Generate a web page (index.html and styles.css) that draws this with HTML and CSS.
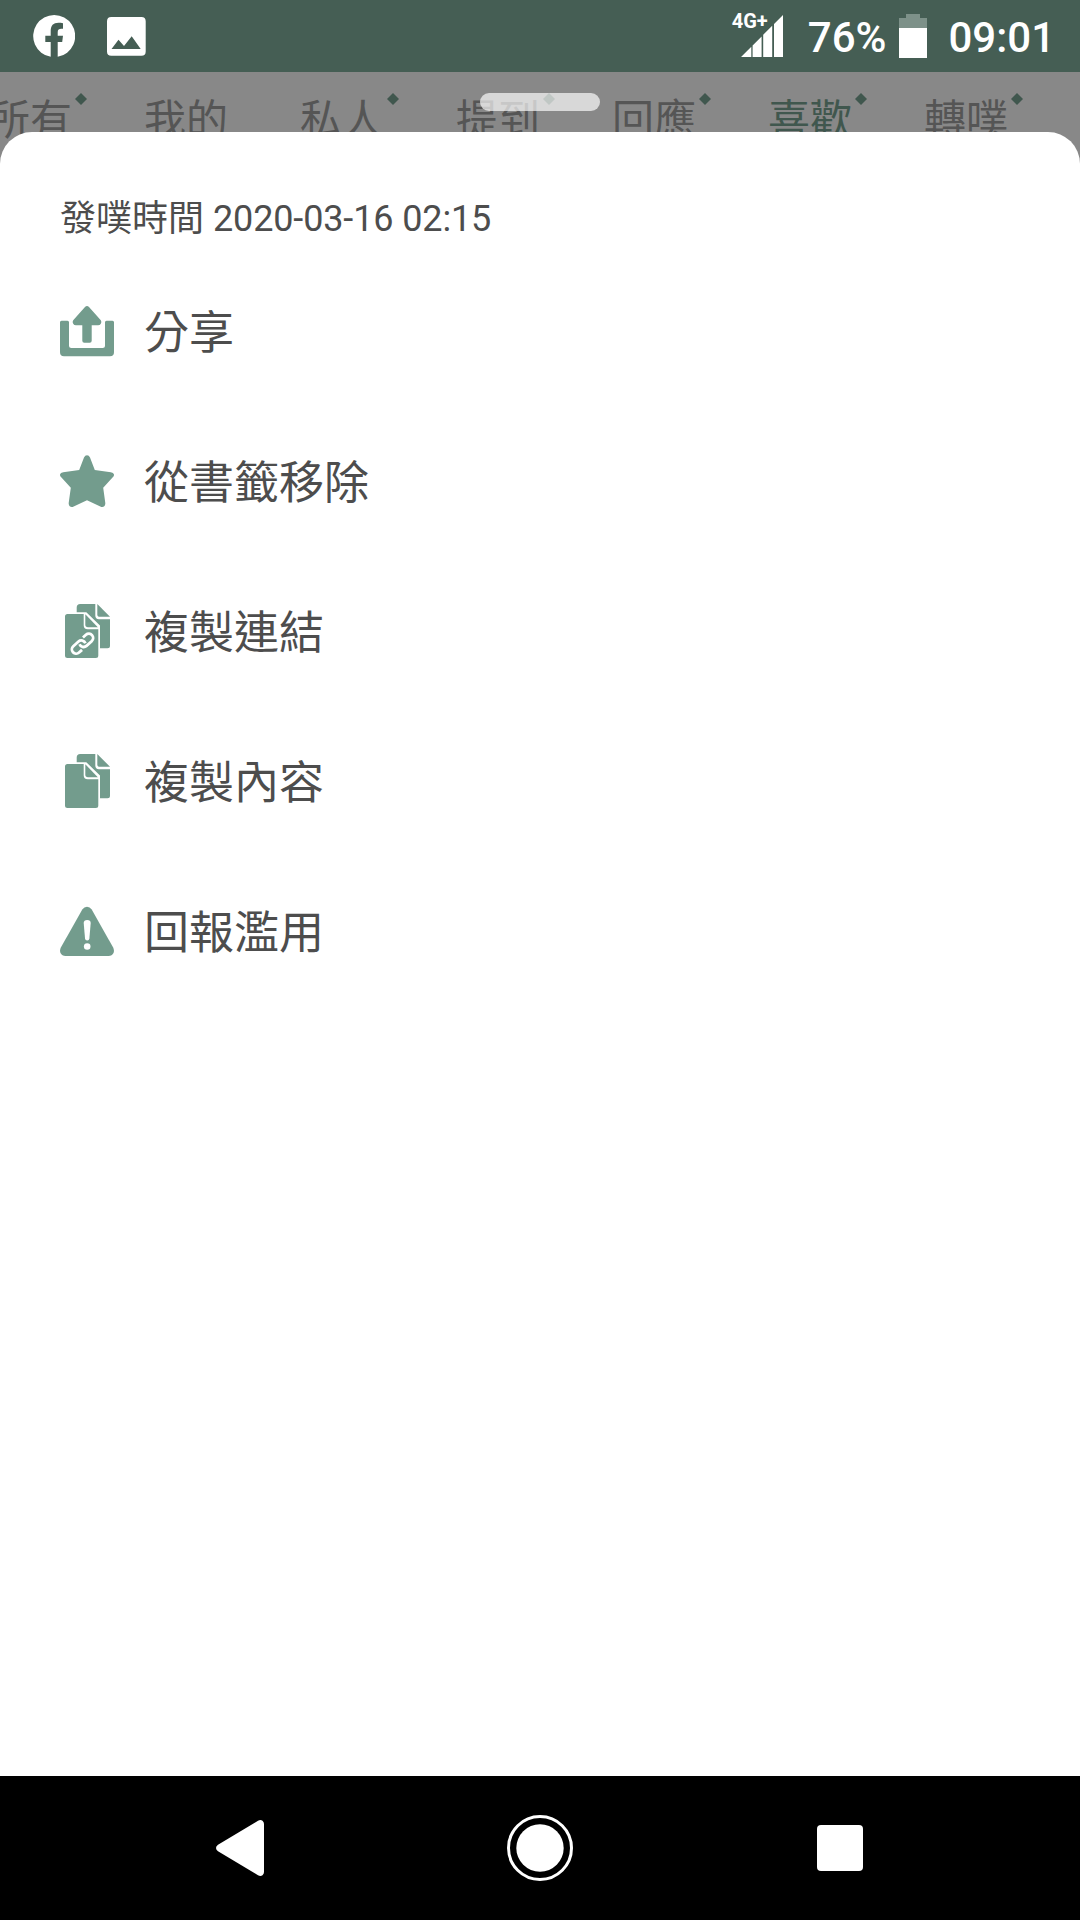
FILE: index.html
```html
<!DOCTYPE html>
<html lang="zh-Hant">
<head>
<meta charset="UTF-8">
<meta name="viewport" content="width=device-width, initial-scale=1.0">
<title>發噗選單</title>
<link rel="stylesheet" href="styles.css">
</head>
<body>

<div class="status-bar">
  <div class="status-left">
    <svg class="icon-facebook" width="42" height="42" viewBox="0 0 42 42">
      <path fill="#fff" d="M17.7 41.8A21 21 0 1 1 24.7 41.8V27H29.2L30 20.7H24.7V17.2C24.7 14.6 26 13.7 28.3 13.7H30V8.2C28.5 7.8 27 7.7 25.5 7.7C20.3 7.7 17.7 10.6 17.7 16V20.7H12.3V27H17.7Z"/>
    </svg>
    <svg width="39" height="39" viewBox="0 0 39 39">
      <path fill="#fff" fill-rule="evenodd" d="M4.3 0H34.4Q38.7 0 38.7 4.3V34.4Q38.7 38.7 34.4 38.7H4.3Q0 38.7 0 34.4V4.3Q0 0 4.3 0ZM4.5 32H33.7L24.7 19.3L17 29L11.5 22.7Z"/>
    </svg>
  </div>
  <div class="status-right">
    <div class="signal">
      <span class="network">4G+</span>
      <svg class="signal-bars" width="42" height="42" viewBox="0 0 42 42">
        <path fill="#fff" d="M0 42L10.3 31.7V42ZM11.6 30.4L20.6 21.4V42H11.6ZM22.2 19.8L31.2 10.8V42H22.2ZM33 9L42 0V42H33Z"/>
      </svg>
    </div>
    <span class="percent">76%</span>
    <svg class="battery" width="28" height="44" viewBox="0 0 28 44">
      <path fill="#7d9189" d="M7 0H21V4H28V14H0V4H7Z"/>
      <path fill="#fff" d="M0 14H28V44H0Z"/>
    </svg>
    <span class="clock">09:01</span>
  </div>
</div>

<div class="tabs">
  <div class="tab new">所有</div>
  <div class="tab">我的</div>
  <div class="tab new">私人</div>
  <div class="tab new">提到</div>
  <div class="tab new">回應</div>
  <div class="tab new active">喜歡</div>
  <div class="tab new">轉噗</div>
  <div class="handle"></div>
</div>

<div class="sheet">
  <div class="post-time">發噗時間 <span class="date">2020-03-16 02:15</span></div>

  <div class="menu-item">
    <svg class="menu-icon" viewBox="0 0 54 54">
      <path d="M1.5 16.7H7.5Q9 16.7 9 18.2V41.5Q9 44 11.5 44H42.5Q45 44 45 41.5V18.2Q45 16.7 46.5 16.7H52.5Q54 16.7 54 18.2V48.3Q54 52.3 50 52.3H4Q0 52.3 0 48.3V18.2Q0 16.7 1.5 16.7Z"/>
      <path d="M25 2.9Q27 1.1 29 2.9L40.8 16.2Q42 18 40.8 19.8Q40 21.3 38 21.3H31.7V36.7Q31.7 38.7 29.7 38.7H24.3Q22.3 38.7 22.3 36.7V21.3H16Q14 21.3 13.2 19.8Q12 18 13.2 16.2Z"/>
    </svg>
    <span class="label">分享</span>
  </div>

  <div class="menu-item">
    <svg class="menu-icon" viewBox="0 0 54 54">
      <path d="M24 3.4Q25 1.2 27 1.2T30 3.4L34.8 16L50.8 18.2Q53.6 18.5 54 20.5Q54.2 22.2 52.3 23.8L43.2 33.8L45.3 49Q45.5 51.5 44 52.6Q42.3 53.6 40.3 52.4L27 46.3L13.7 52.4Q11.7 53.6 10 52.6Q8.5 51.5 8.7 49L10.8 33.8L1.7 23.8Q-.2 22.2 0 20.5Q.4 18.5 3.2 18.2L19.2 16Z"/>
    </svg>
    <span class="label">從書籤移除</span>
  </div>

  <div class="menu-item">
    <svg class="menu-icon" viewBox="0 0 54 54">
      <path d="M20.2 0H35.3V11.5Q35.3 15.2 39 15.2H50V41.8Q50 44.3 47.5 44.3H40V21.5L26.3 8.3H16.7V3.5Q16.7 0 20.2 0Z"/>
      <path d="M37.3 0L50 12.8H40Q37.3 12.8 37.3 10.5Z"/>
      <path d="M7.5 10H23.7V21.2Q23.7 25.2 27.7 25.2H38.3V51.5Q38.3 54 35.8 54H7.5Q5 54 5 51.5V12.5Q5 10 7.5 10Z"/>
      <path d="M25.3 10.3L37.8 23.3H28Q25.3 23.3 25.3 20.6Z"/>
      <g class="link" transform="rotate(-42 22.5 39.7)">
        <path d="M18 44H14A4.3 4.3 0 0 1 14 35.4H21A4.3 4.3 0 0 1 25 41.3"/>
        <path d="M27 35.4H31A4.3 4.3 0 0 1 31 44H24A4.3 4.3 0 0 1 20 38.1"/>
      </g>
    </svg>
    <span class="label">複製連結</span>
  </div>

  <div class="menu-item">
    <svg class="menu-icon" viewBox="0 0 54 54">
      <path d="M20.2 0H35.3V11.5Q35.3 15.2 39 15.2H50V41.8Q50 44.3 47.5 44.3H40V21.5L26.3 8.3H16.7V3.5Q16.7 0 20.2 0Z"/>
      <path d="M37.3 0L50 12.8H40Q37.3 12.8 37.3 10.5Z"/>
      <path d="M7.5 10H23.7V21.2Q23.7 25.2 27.7 25.2H38.3V51.5Q38.3 54 35.8 54H7.5Q5 54 5 51.5V12.5Q5 10 7.5 10Z"/>
      <path d="M25.3 10.3L37.8 23.3H28Q25.3 23.3 25.3 20.6Z"/>
    </svg>
    <span class="label">複製內容</span>
  </div>

  <div class="menu-item">
    <svg class="menu-icon" viewBox="0 0 54 54">
      <path d="M22.3 5.6Q24.2 2.7 27 2.7T31.7 5.6L53 43.2Q54.6 46.3 53.5 49Q52 52 48.5 52H5.5Q2 52 .5 49Q-.6 46.3 1 43.2Z"/>
      <path class="mark" d="M23.7 19Q23.7 16 27.2 16T30.7 19L29.4 34.3Q29.2 36.5 27.2 36.5T25 34.3Z"/>
      <circle class="mark" cx="27.2" cy="42.5" r="3.3"/>
    </svg>
    <span class="label">回報濫用</span>
  </div>
</div>

<div class="nav-bar">
  <svg width="48" height="56" viewBox="0 0 48 56">
    <path fill="#fff" d="M2 24.8L42 .8Q44.5-.6 46.5 .8Q48 2 48 4V52Q48 54 46.5 55.2Q44.5 56.6 42 55.2L2 31.2Q0 30 0 28T2 24.8Z"/>
  </svg>
  <svg width="66" height="66" viewBox="0 0 66 66">
    <circle cx="33" cy="33" r="31.5" fill="none" stroke="#fff" stroke-width="3"/>
    <circle cx="33" cy="33" r="23.7" fill="#fff"/>
  </svg>
  <div class="recents"></div>
</div>

</body>
</html>
```

FILE: styles.css
```css
body {
  margin: 0;
  width: 1080px;
  height: 1920px;
  display: flex;
  flex-direction: column;
  overflow: hidden;
  background: #888;
  color: #4d4d4d;
  font-family: Roboto, "Noto Sans CJK TC", sans-serif;
}
svg {
  display: block;
  flex: none;
}

/* status bar */
.status-bar {
  display: flex;
  justify-content: space-between;
  height: 72px;
  box-sizing: border-box;
  padding: 0 25px 0 33px;
  background: #455e54;
  color: #fff;
  font-size: 42px;
  font-weight: 500;
  line-height: 68px;
}
.status-left {
  display: flex;
  align-items: center;
  gap: 32px;
}
.status-right {
  display: flex;
  align-items: center;
}
.percent,
.clock {
  padding-top: 4px;
}
.signal {
  display: flex;
  margin-right: 25px;
}
.network {
  font-size: 20px;
  font-weight: 700;
  line-height: 24px;
  margin-top: -6px;
}
.signal-bars {
  margin-left: -27px;
}
.battery {
  margin: 0 21px 0 13px;
}

/* tabs behind the sheet */
.tabs {
  position: relative;
  display: flex;
  height: 60px;
  margin-left: -48px;
  color: #555;
  font-size: 42px;
  line-height: 98px;
}
.tab {
  position: relative;
  flex: none;
  width: 156px;
  text-align: center;
}
.tab.active {
  color: #40574e;
}
.tab.new::after {
  content: "";
  position: absolute;
  left: 123px;
  top: 21px;
  width: 12px;
  height: 12px;
  clip-path: polygon(50% 0, 100% 50%, 50% 100%, 0 50%);
  background: #40574e;
}
.handle {
  position: absolute;
  left: 528px;
  top: 21px;
  width: 120px;
  height: 18px;
  border-radius: 9px;
  background: rgba(255, 255, 255, .67);
}

/* bottom sheet */
.sheet {
  position: relative;
  flex: 1;
  padding: 60px 60px 0;
  border-radius: 32px 32px 0 0;
  background: #fff;
}
.post-time {
  height: 64px;
  font-size: 36px;
  line-height: 54px;
}
.date {
  letter-spacing: -.13px;
}
.menu-item {
  display: flex;
  align-items: center;
  gap: 30px;
  height: 150px;
  font-size: 45px;
}
.label {
  padding-bottom: 4px;
}
.menu-icon {
  width: 54px;
  height: 54px;
  fill: #739c8d;
}
.menu-icon .mark {
  fill: #fff;
}
.link {
  fill: none;
  stroke: #fff;
  stroke-width: 2.8;
}

/* android navigation */
.nav-bar {
  display: grid;
  grid-template-columns: repeat(3, 300px);
  justify-content: center;
  align-items: center;
  justify-items: center;
  height: 144px;
  background: #000;
}
.recents {
  width: 46px;
  height: 46px;
  border-radius: 4px;
  background: #fff;
}
```
